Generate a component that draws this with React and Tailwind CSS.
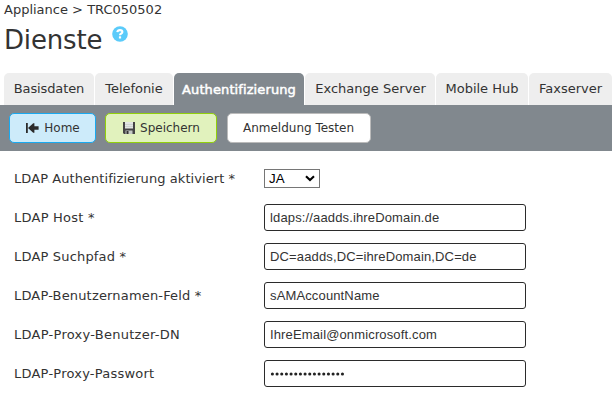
const tabs = [
  { label: 'Basisdaten', width: 'w-[90px]', tracking: 'tracking-[-0.12px]' },
  { label: 'Telefonie', width: 'w-[78px]', tracking: 'tracking-[-0.05px]' },
  { label: 'Authentifizierung', width: 'w-[130px]', tracking: 'tracking-[0.1px]', active: true },
  { label: 'Exchange Server', width: 'w-[130px]', tracking: 'tracking-[0.02px] pl-px' },
  { label: 'Mobile Hub', width: 'w-[92px]', tracking: 'tracking-normal' },
  { label: 'Faxserver', width: 'w-[83px]', tracking: 'tracking-normal' },
];

const fields = [
  { label: 'LDAP Host *', tracking: 'tracking-[0.24px]', value: 'ldaps://aadds.ihreDomain.de' },
  { label: 'LDAP Suchpfad *', tracking: 'tracking-[0.18px]', value: 'DC=aadds,DC=ihreDomain,DC=de' },
  { label: 'LDAP-Benutzernamen-Feld *', tracking: 'tracking-[0.17px]', value: 'sAMAccountName' },
  { label: 'LDAP-Proxy-Benutzer-DN', tracking: 'tracking-[0.27px]', value: 'IhreEmail@onmicrosoft.com' },
  { label: 'LDAP-Proxy-Passwort', tracking: 'tracking-[0.23px]', password: true },
];

function HomeIcon() {
  return (
    <svg className="h-[10px] w-[13px] shrink-0" viewBox="0 0 13 10" fill="#2b2b2b">
      <path d="M0 0h1.8v10H0zM2 5 7.2 0.3H8.4v3h4.2v3.4H8.4v3H7.2z" />
    </svg>
  );
}

function SaveIcon() {
  return (
    <svg className="h-[12px] w-[12px] shrink-0" viewBox="0 0 12 12">
      <path d="M0 0h12v12H1L0 11z" fill="#444" />
      <path d="M2 0h8v6.5H2z" fill="#e2e6e3" />
      <path d="M2 2.5h8M2 4.5h8" stroke="#c3c9c5" strokeWidth="0.7" />
      <path d="M2.5 8.5h7V12h-7z" fill="#c5cac6" />
      <path d="M3.5 9h2v3h-2z" fill="#333" />
    </svg>
  );
}

function Dots() {
  return (
    <svg className="h-[4px] w-[76px]" viewBox="0 0 76 4" fill="#222">
      {Array.from({ length: 16 }, (_, i) => (
        <circle key={i} cx={2.4 + i * 4.67} cy="2" r="1.55" />
      ))}
    </svg>
  );
}

export default function App() {
  return (
    <div className="h-[403px] w-[612px] overflow-hidden bg-white font-['Verdana','DejaVu_Sans',sans-serif] text-[13px] leading-[16px] text-[#333]">
      <header className="flex h-[73px] flex-col pl-[4px] pt-[2px]">
        <div className="h-[16px] whitespace-nowrap">Appliance &gt; TRC050502</div>
        <div className="flex">
          <h1 className="w-[108px] pt-[6px] text-[26px] leading-[32px] tracking-[-0.15px]">Dienste</h1>
          <svg className="mt-[8px] h-[16px] w-[16px]" viewBox="0 0 16 16">
            <circle cx="8" cy="8" r="7.8" fill="#5bcbfa" />
            <path d="M5.3 6.2Q5.6 4.1 8 4.1T10.4 6.1Q10.4 7.1 9 7.7Q8 8.2 8 9.2" fill="none" stroke="white" strokeWidth="2.1" />
            <path d="M6.9 10.3h2.2v2.2H6.9z" fill="white" />
          </svg>
        </div>
      </header>

      <nav className="flex h-[32px] gap-px pl-[4px]">
        {tabs.map((tab) => (
          <div
            key={tab.label}
            className={`flex h-[32px] shrink-0 items-center justify-center whitespace-nowrap rounded-t-[5px] ${tab.width} ${tab.tracking} ${
              tab.active ? 'bg-[#81888e] pt-[2px] text-white [-webkit-text-stroke:0.5px_white]' : 'bg-[#eee]'
            }`}
          >
            {tab.label}
          </div>
        ))}
      </nav>

      <div className="flex h-[46px] bg-[#81888e] pl-[9px] pt-[8px] text-[12px]">
        <button className="flex h-[30px] w-[87px] items-center justify-center gap-[5px] rounded-[5px] border border-[#18a9f0] bg-[#cdebfa] pl-px">
          <HomeIcon />
          Home
        </button>
        <button className="ml-[9px] flex h-[30px] w-[112px] items-center justify-center gap-[5px] rounded-[5px] border border-[#91d00b] bg-[#e1f2bd] pl-px">
          <SaveIcon />
          Speichern
        </button>
        <button className="ml-[10px] h-[30px] w-[144px] rounded-[5px] border border-[#bbb] bg-white pr-px">
          Anmeldung Testen
        </button>
      </div>

      <main className="flex flex-col gap-[12px] pl-[14px] pt-[14px]">
        <div className="flex h-[27px] items-center">
          <div className="w-[250px] whitespace-nowrap tracking-[0.07px]">LDAP Authentifizierung aktiviert *</div>
          <div className="flex h-[19px] w-[56px] items-center justify-between border border-[#767676] pl-[4px] pr-[4px] font-['Liberation_Sans',sans-serif] text-[13.33px] text-black">
            JA
            <svg className="h-[7px] w-[10px]" viewBox="0 0 10 7">
              <path d="M1 1.2 5 5 9 1.2" fill="none" stroke="black" strokeWidth="2.1" />
            </svg>
          </div>
        </div>
        {fields.map((field) => (
          <div key={field.label} className="flex h-[27px] items-center">
            <div className={`w-[250px] whitespace-nowrap ${field.tracking}`}>{field.label}</div>
            <div className="flex h-[27px] w-[262px] items-center rounded-[3px] border border-[#2b2b2b] pl-[5px] font-['Liberation_Sans',sans-serif] tracking-[0.14px]">
              {field.password ? <Dots /> : field.value}
            </div>
          </div>
        ))}
      </main>
    </div>
  );
}
